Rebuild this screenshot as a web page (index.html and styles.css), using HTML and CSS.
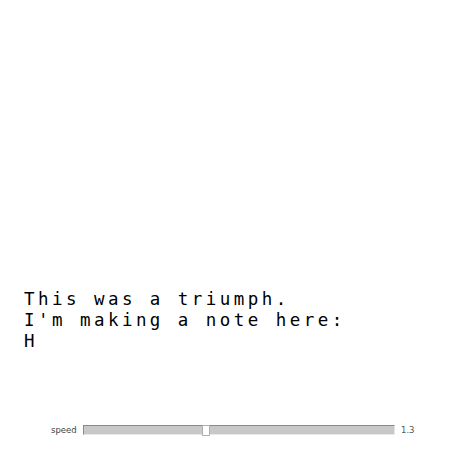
FILE: index.html
```html
<!DOCTYPE html>
<html>
<head>
<meta charset="utf-8">
<link rel="stylesheet" href="styles.css">
</head>
<body>
<div class="page">
  <div class="note">
    <div class="line">This was a triumph.</div>
    <div class="line">I'm making a note here:</div>
    <div class="line">H</div>
  </div>
  <div class="controls">
    <span class="label">speed</span>
    <div class="track"><div class="thumb"></div></div>
    <span class="value">1.3</span>
  </div>
</div>
</body>
</html>
```
FILE: styles.css
```css
html, body {
  margin: 0;
  padding: 0;
  background: #ffffff;
}
.page {
  width: 465px;
  height: 465px;
  display: flex;
  flex-direction: column;
  box-sizing: border-box;
  padding-top: 289px;
}
.note {
  padding-left: 24px;
  font-family: "DejaVu Sans Mono", monospace;
  font-size: 17.5px;
  letter-spacing: 3.45px;
  line-height: 21px;
  color: #000;
}
.line {
  white-space: pre;
}
.controls {
  margin-top: 72px;
  display: flex;
  align-items: center;
  height: 12px;
  padding-left: 51px;
}
.label {
  font-family: "DejaVu Sans", sans-serif;
  font-size: 8.5px;
  color: #444;
  width: 32px;
}
.track {
  position: relative;
  width: 310px;
  height: 8px;
  background: #c8c8c8;
  border-top: 1px solid #8a8a8a;
  border-left: 1px solid #8a8a8a;
  border-bottom: 1px solid #e8e8e8;
  border-right: 1px solid #e8e8e8;
}
.thumb {
  position: absolute;
  left: 118px;
  top: -1px;
  width: 6px;
  height: 9px;
  background: #fff;
  border: 1px solid #b0b0b0;
}
.value {
  margin-left: 6px;
  font-family: "DejaVu Sans", sans-serif;
  font-size: 8.5px;
  color: #555;
}
```
